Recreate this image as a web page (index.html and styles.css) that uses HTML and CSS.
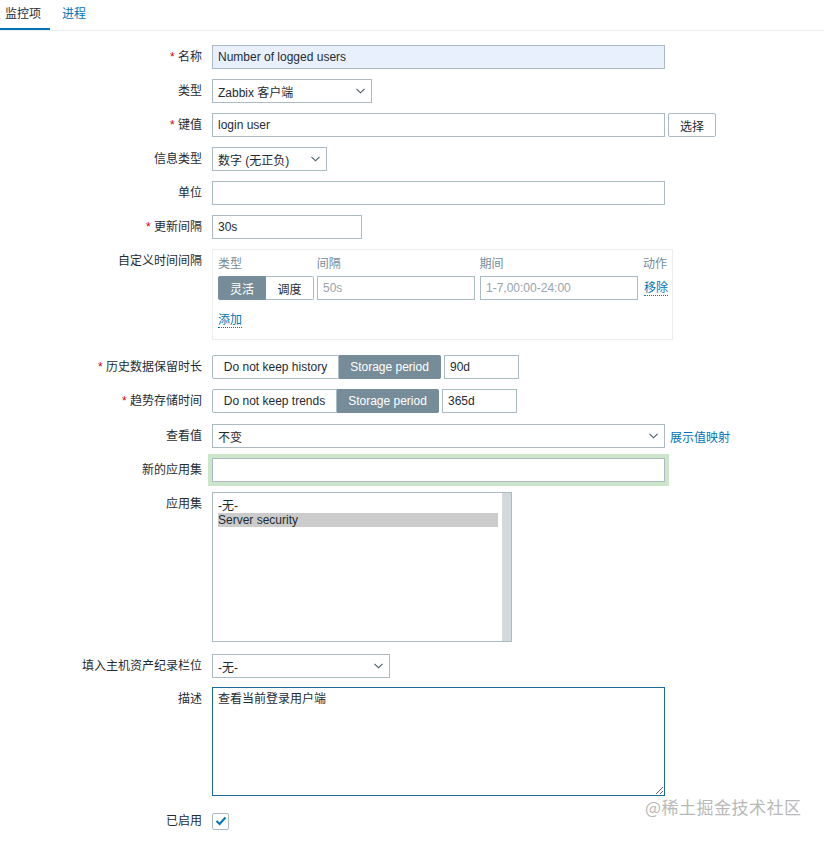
FILE: index.html
```html
<!DOCTYPE html>
<html lang="zh">
<head>
<meta charset="utf-8">
<title>监控项</title>
<link rel="stylesheet" href="styles.css">
</head>
<body>
<div class="tabs">
  <span class="tab active">监控项</span>
  <span class="tab">进程</span>
</div>

<form class="form">
  <div class="row">
    <label class="lbl req">名称</label>
    <div class="field"><input class="inp w453 autofill" value="Number of logged users"></div>
  </div>

  <div class="row">
    <label class="lbl">类型</label>
    <div class="field">
      <div class="select w160"><span>Zabbix 客户端</span><svg class="chev" width="9" height="6" viewBox="0 0 9 6"><path d="M0.5 0.8 L4.5 4.8 L8.5 0.8" fill="none" stroke="#4a5a62" stroke-width="1.1"/></svg></div>
    </div>
  </div>

  <div class="row">
    <label class="lbl req">键值</label>
    <div class="field"><input class="inp w453" value="login user"><button type="button" class="btn">选择</button></div>
  </div>

  <div class="row">
    <label class="lbl">信息类型</label>
    <div class="field">
      <div class="select w115"><span>数字 (无正负)</span><svg class="chev" width="9" height="6" viewBox="0 0 9 6"><path d="M0.5 0.8 L4.5 4.8 L8.5 0.8" fill="none" stroke="#4a5a62" stroke-width="1.1"/></svg></div>
    </div>
  </div>

  <div class="row">
    <label class="lbl">单位</label>
    <div class="field"><input class="inp w453" value=""></div>
  </div>

  <div class="row">
    <label class="lbl req">更新间隔</label>
    <div class="field"><input class="inp w150" value="30s"></div>
  </div>

  <div class="row row-box">
    <label class="lbl">自定义时间间隔</label>
    <div class="field">
      <div class="intervals">
        <div class="iv-head">
          <span class="c1">类型</span>
          <span class="c2">间隔</span>
          <span class="c3">期间</span>
          <span class="c4">动作</span>
        </div>
        <div class="iv-row">
          <span class="c1 seg">
            <span class="on s48">灵活</span><span class="s48">调度</span>
          </span>
          <input class="c2 inp ph" value="50s">
          <input class="c3 inp ph" value="1-7,00:00-24:00">
          <a class="c4 link dotted">移除</a>
        </div>
        <a class="link dotted add">添加</a>
      </div>
    </div>
  </div>

  <div class="row">
    <label class="lbl req">历史数据保留时长</label>
    <div class="field">
      <span class="seg">
        <span class="w127">Do not keep history</span><span class="on w102">Storage period</span>
      </span>
      <input class="inp w75 ml3" value="90d">
    </div>
  </div>

  <div class="row row-trends">
    <label class="lbl req">趋势存储时间</label>
    <div class="field">
      <span class="seg">
        <span class="w125">Do not keep trends</span><span class="on w102">Storage period</span>
      </span>
      <input class="inp w75 ml3" value="365d">
    </div>
  </div>

  <div class="row">
    <label class="lbl">查看值</label>
    <div class="field">
      <div class="select w453"><span>不变</span><svg class="chev" width="9" height="6" viewBox="0 0 9 6"><path d="M0.5 0.8 L4.5 4.8 L8.5 0.8" fill="none" stroke="#4a5a62" stroke-width="1.1"/></svg></div>
      <a class="link ml5">展示值映射</a>
    </div>
  </div>

  <div class="row">
    <label class="lbl">新的应用集</label>
    <div class="field"><input class="inp w453 glow" value=""></div>
  </div>

  <div class="row row-list">
    <label class="lbl">应用集</label>
    <div class="field top">
      <div class="listbox">
        <div class="opts">
          <div class="opt">-无-</div>
          <div class="opt sel">Server security</div>
        </div>
        <div class="scroll"></div>
      </div>
    </div>
  </div>

  <div class="row row-inv">
    <label class="lbl">填入主机资产纪录栏位</label>
    <div class="field">
      <div class="select w178"><span>-无-</span><svg class="chev" width="9" height="6" viewBox="0 0 9 6"><path d="M0.5 0.8 L4.5 4.8 L8.5 0.8" fill="none" stroke="#4a5a62" stroke-width="1.1"/></svg></div>
    </div>
  </div>

  <div class="row row-desc">
    <label class="lbl">描述</label>
    <div class="field top"><textarea class="area">查看当前登录用户端</textarea></div>
  </div>

  <div class="row">
    <label class="lbl">已启用</label>
    <div class="field">
      <span class="check"><svg width="12" height="10" viewBox="0 0 12 10"><path d="M1.5 5 L4.6 8 L10.5 1.5" fill="none" stroke="#0275b8" stroke-width="2"/></svg></span>
    </div>
  </div>
</form>

<div class="watermark">@稀土掘金技术社区</div>
</body>
</html>
```

FILE: styles.css
```css
* { box-sizing: border-box; }

html, body {
  margin: 0;
  background: #fff;
}

body {
  position: relative;
  width: 824px;
  height: 841px;
  overflow: hidden;
  font: 12px "Liberation Sans", Arial, "Noto Sans CJK SC", sans-serif;
  color: #1f2c33;
}

/* tabs */
.tabs {
  display: flex;
  height: 31px;
  border-bottom: 1px solid #ebeef0;
}

.tab {
  line-height: 28px;
  padding: 0 8px 0 5px;
  border-bottom: 2px solid transparent;
  color: #0275b8;
}

.tab.active {
  width: 50px;
  color: #1f2c33;
  border-bottom-color: #0275b8;
}

.tab + .tab {
  margin-left: 4px;
  padding: 0 8px;
}

/* form */
.form {
  padding-top: 14px;
}

.row {
  display: grid;
  grid-template-columns: 202px 1fr;
  column-gap: 10px;
  margin-bottom: 10px;
}

.row-box { margin-bottom: 15px; }
.row-trends { margin-bottom: 11px; }
.row-list { margin-bottom: 12px; }
.row-inv { margin-bottom: 9px; }
.row-desc { margin-bottom: 13px; }

.lbl {
  text-align: right;
  line-height: 24px;
  white-space: nowrap;
}

.lbl.req::before {
  content: "* ";
  color: #d40000;
}

.field {
  display: flex;
  align-items: center;
}

.field.top { align-items: flex-start; }

.inp {
  height: 24px;
  padding: 0 5px;
  border: 1px solid #acbbc2;
  background: #fff;
  font: inherit;
  color: inherit;
  outline: none;
  margin: 0;
}

.autofill { background: #e8f0fe; }

.glow {
  box-shadow: 0 0 0 4px #cde5cb;
  border-color: #acbbc2;
}

.ph { color: #98a4aa; }

.w453 { width: 453px; }
.w160 { width: 160px; }
.w115 { width: 115px; }
.w150 { width: 150px; }
.w178 { width: 178px; }
.w75 { width: 75px; }
.ml3 { margin-left: 3px; }
.ml5 { margin-left: 5px; }

.btn {
  height: 24px;
  width: 48px;
  margin-left: 3px;
  padding: 0;
  border: 1px solid #acbbc2;
  border-radius: 2px;
  background: #fff;
  font: inherit;
  color: inherit;
}

.select {
  display: flex;
  align-items: center;
  justify-content: space-between;
  height: 24px;
  padding: 0 5px 0 5px;
  border: 1px solid #acbbc2;
  background: #fff;
  white-space: nowrap;
}

.chev { flex: none; margin-right: 1px; }

.link {
  color: #0275b8;
  text-decoration: none;
  cursor: pointer;
}

.dotted {
  border-bottom: 1px dotted #0275b8;
  line-height: 14px;
}

/* segmented buttons */
.seg {
  display: inline-flex;
  height: 24px;
}

.seg > span {
  display: flex;
  align-items: center;
  justify-content: center;
  height: 24px;
  border: 1px solid #acbbc2;
  background: #fff;
  white-space: nowrap;
}

.seg > span:first-child { border-radius: 2px 0 0 2px; }
.seg > span:last-child { border-radius: 0 2px 2px 0; }
.seg > span + span { border-left: none; }

.seg > .on {
  background: #768d99;
  border-color: #768d99;
  color: #fff;
}

.s48 { width: 48px; }
.w127 { width: 127px; }
.w125 { width: 125px; }
.w102 { width: 102px; }

/* custom intervals */
.intervals {
  width: 461px;
  height: 91px;
  padding: 3px 5px 0 5px;
  border: 1px solid #ebeef0;
}

.iv-head,
.iv-row {
  display: flex;
  align-items: center;
}

.iv-head {
  height: 18px;
  color: #768d99;
}

.iv-row {
  margin-top: 5px;
  height: 24px;
}

.c1 { width: 96px; margin-right: 3px; }
.c2 { width: 158px; margin-right: 5px; }
.c3 { width: 158px; margin-right: 6px; }
.c4 { flex: none; }

.add {
  display: inline-block;
  margin-top: 13px;
}

/* listbox */
.listbox {
  display: flex;
  width: 300px;
  height: 150px;
  border: 1px solid #acbbc2;
  background: #fff;
}

.opts {
  flex: 1;
  padding: 6px 4px 0 5px;
}

.opt {
  line-height: 14px;
  height: 14px;
  white-space: nowrap;
}

.opt.sel { background: #cccccc; }

.scroll {
  width: 9px;
  background: #d3dadd;
}

/* textarea */
.area {
  width: 453px;
  height: 109px;
  padding: 4px 5px;
  border: 1px solid #1b6c9c;
  font: inherit;
  line-height: 14px;
  color: inherit;
  outline: none;
  margin: 0;
  resize: both;
}

/* checkbox */
.check {
  display: flex;
  align-items: center;
  justify-content: center;
  width: 17px;
  height: 17px;
  border: 1px solid #acbbc2;
  border-radius: 2px;
  background: #fff;
}

.watermark {
  position: absolute;
  left: 645px;
  top: 796px;
  font: 17px "Noto Sans CJK SC", sans-serif;
  line-height: 22px;
  letter-spacing: 0.5px;
  color: #b9b9b9;
  white-space: nowrap;
}
```
